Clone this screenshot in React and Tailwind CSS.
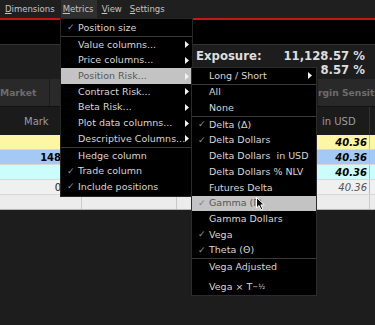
import React from 'react';

const font = { fontFamily: '"DejaVu Sans", Verdana, sans-serif' };

// little white triangle used for submenu arrows
const Arrow = () => (
  <svg width="4" height="7" viewBox="0 0 4 7" className="shrink-0">
    <polygon points="0,0 4,3.5 0,7" fill="#f2f2f2" />
  </svg>
);

const Check = ({ hl }) => (
  <span className={`absolute left-[6px] text-[9px] ${hl ? 'text-[#7a7f88]' : 'text-[#8a93a6]'}`}>✓</span>
);

const metricsItems = [
  { label: 'Position size', check: true, h: 'h-[16px]' },
  { sep: true },
  { label: 'Value columns...', arrow: true },
  { label: 'Price columns...', arrow: true },
  { label: 'Position Risk...', arrow: true, hl: true },
  { label: 'Contract Risk...', arrow: true },
  { label: 'Beta Risk...', arrow: true },
  { label: 'Plot data columns...', arrow: true },
  { label: 'Descriptive Columns...', arrow: true },
  { sep: true },
  { label: 'Hedge column' },
  { label: 'Trade column', check: true },
  { label: 'Include positions', check: true },
];

const riskItems = [
  { label: 'Long / Short', arrow: true },
  { sep: true },
  { label: 'All' },
  { label: 'None' },
  { sep: true },
  { label: 'Delta (Δ)', check: true },
  { label: 'Delta Dollars', check: true },
  { label: 'Delta Dollars\u00a0 in USD' },
  { label: 'Delta Dollars % NLV' },
  { label: 'Futures Delta' },
  { label: 'Gamma (Γ)', check: true, hl: true },
  { label: 'Gamma Dollars' },
  { label: 'Vega', check: true },
  { label: 'Theta (Θ)', check: true },
  { sep: true },
  { label: 'Vega Adjusted' },
  { label: 'vegaT', h: 'h-[20px]' },
];

const MenuList = ({ items, arrowPad }) => (
  <>
    {items.map((it, i) =>
      it.sep ? (
        <div key={i} className="h-px bg-[#3a3a3a]" />
      ) : (
        <div
          key={i}
          className={`relative flex items-center pl-[17px] ${arrowPad} ${it.h || 'h-[15.7px]'} ${
            it.hl ? 'bg-[#c3c3c3] text-[#575757]' : 'text-[#d6d6d6]'
          }`}
        >
          {it.check && <Check hl={it.hl} />}
          <span className="flex-1 whitespace-nowrap">
            {it.label === 'vegaT' ? (
              <span className="relative top-[2px]">
                Vega × T<sup className="text-[7px] relative top-[-1px]">−½</sup>
              </span>
            ) : (
              it.label
            )}
          </span>
          {it.arrow && <Arrow />}
        </div>
      )
    )}
  </>
);

const rows = [
  { bg: 'bg-[#fdf6a3]', mark: '', bold: true },
  { bg: 'bg-[#a2caf4]', mark: '148', bold: true },
  { bg: 'bg-[#cbfdfd]', mark: '', bold: true },
  { bg: 'bg-[#f0f0f0]', mark: '0', bold: false },
];

export default function App() {
  return (
    <div className="relative w-[375px] h-[325px] overflow-hidden bg-[#1d1d1d]" style={font}>
      {/* menu bar */}
      <div className="h-[18px] flex items-center text-[8.5px] text-[#c4c4c4] bg-[#1f1f1f]">
        <span className="ml-[5px]"><u>D</u>imensions</span>
        <span className="ml-[6px] h-full w-[36px] pl-[2px] flex items-center bg-[#2f2f2f]"><u>M</u>etrics</span>
        <span className="ml-[5px]"><u>V</u>iew</span>
        <span className="ml-[8px]"><u>S</u>ettings</span>
      </div>
      <div className="h-[2px] bg-[#c4161c]" />
      <div className="h-[25px] bg-black border-b border-[#333]" />

      {/* exposure summary */}
      <div className="h-[34px] flex">
        <div className="w-[193px]" />
        <div className="flex-1 pt-[4px] pl-[3px] pr-[10px] text-[11.7px] font-bold text-[#dedede] leading-[14px]">
          <div className="flex justify-between">
            <span>Exposure:</span>
            <span>11,128.57 %</span>
          </div>
          <div className="text-right">8.57 %</div>
        </div>
      </div>

      {/* group header band */}
      <div className="h-[27px] flex items-center bg-[#292929] text-[9.2px] font-bold text-[#6c6c6c]">
        <div className="w-[50px] h-full flex items-center border-r border-[#1a1a1a]">Market</div>
        <div className="w-[268px] h-full border-r border-[#1a1a1a]" />
        <div className="flex-1 whitespace-nowrap">rgin Sensit</div>
      </div>

      {/* column header */}
      <div className="h-[29px] flex items-center bg-[#1b1b1b] text-[10px] text-[#9c9c9c] border-t border-[#111]">
        <div className="w-[66px] pl-[24px]">Mark</div>
        <div className="w-[252px]" />
        <div className="w-[52px] h-full flex items-center pl-[4px] border-r border-[#333]">in USD</div>
      </div>

      {/* data rows */}
      {rows.map((r, i) => (
        <div key={i} className={`h-[15px] flex items-center text-[10px] ${r.bg} text-black border-b border-[#d8d8d8]`}>
          <div className={`w-[61px] text-right ${r.bold ? 'font-bold' : 'text-[#222]'}`}>{r.mark}</div>
          <div className="w-[257px]" />
          <div
            className={`w-[52px] h-full flex items-center justify-end pr-[2px] italic border-r border-[#bbb] ${
              r.bold ? 'font-bold' : 'text-[#555]'
            }`}
          >
            40.36
          </div>
        </div>
      ))}
      <div className="h-[15px] flex bg-[#ececec] border-b border-[#b5b5b5]">
        <div className="w-[82px] border-r border-[#c9c9c9]" />
        <div className="w-[95px] border-r border-[#c9c9c9]" />
        <div className="w-[141px]" />
        <div className="w-[52px] border-r border-[#c9c9c9]" />
      </div>

      {/* Metrics menu */}
      <div className="absolute left-[60px] top-[18px] w-[133px] bg-black border border-[#262626] text-[9.5px] pt-px pb-px">
        <MenuList items={metricsItems} arrowPad="pr-[3px]" />
      </div>

      {/* Position Risk submenu */}
      <div className="absolute left-[191px] top-[67px] w-[126px] bg-black border border-[#2c2c2c] text-[9.5px]">
        <MenuList items={riskItems} arrowPad="pr-[4px]" />
      </div>

      {/* mouse pointer */}
      <svg className="absolute left-[256px] top-[197px]" width="10" height="14" viewBox="0 0 10 14">
        <path d="M0.5 0.5 L0.5 11 L3 8.6 L5 12.8 L6.8 12 L4.9 7.9 L8.3 7.9 Z" fill="#111" stroke="#fff" strokeWidth="1" />
      </svg>
    </div>
  );
}
